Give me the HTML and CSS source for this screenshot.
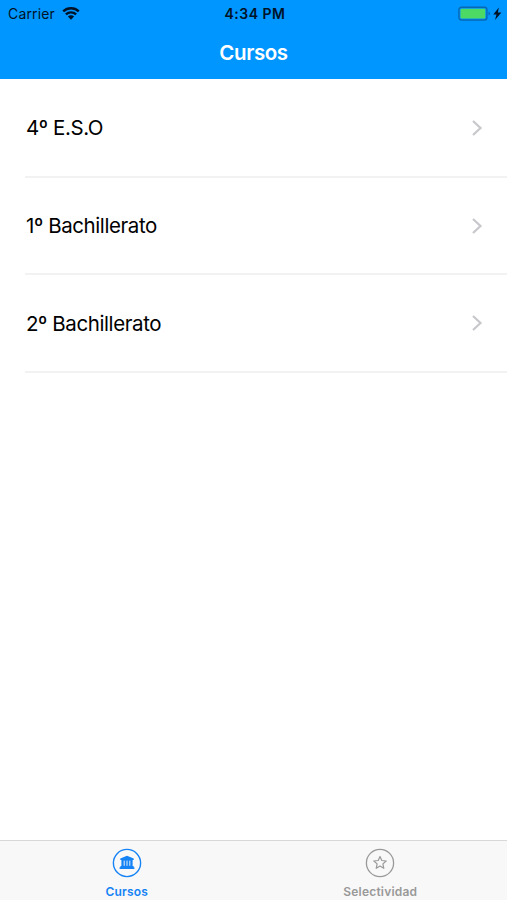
FILE: index.html
```
<!DOCTYPE html>
<html lang="es">
<head>
  <meta charset="UTF-8" />
  <meta name="viewport" content="width=device-width, initial-scale=1.0"/>
  <title>Cursos</title>
  <link rel="stylesheet" href="styles.css">
</head>
<body>
  <header>
    <div class="status-bar">
      <div class="network">
        <span class="carrier">Carrier</span>
        <svg class="wifi" width="18" height="13" viewBox="0 0 18 13">
          <path d="M1.2 4.4a11.2 11.2 0 0 1 15.6 0M3.9 7.4a7.3 7.3 0 0 1 10.2 0" fill="none" stroke="#001226" stroke-width="2.3"/>
          <path d="M9 12.7L5.9 9.5a4.4 4.4 0 0 1 6.2 0z" fill="#001226"/>
        </svg>
      </div>
      <span class="time">4:34 PM</span>
      <svg class="battery" width="44" height="16" viewBox="0 0 44 16">
        <rect x="0.9" y="1.2" width="28" height="12.8" rx="2.5" fill="none" stroke="#0868b4" stroke-width="1.4"/>
        <rect x="2.5" y="2.7" width="24.8" height="9.8" rx="1" fill="#4cd964"/>
        <path d="M30.5 5.6v4q1.5-.6 1.5-2t-1.5-2z" fill="#0868b4"/>
        <path d="M40.8 1.5L35.3 8.4h3.2L37 13.9 43.4 6.5h-3.5z" fill="#001226"/>
      </svg>
    </div>
    <h1>Cursos</h1>
  </header>

  <ul class="courses">
    <li>
      <span class="course-1">4º E.S.O</span>
      <svg class="chevron" width="12" height="18" viewBox="0 0 12 18"><path d="M2 2l7.5 7L2 16"/></svg>
    </li>
    <li>
      <span class="course-2">1º Bachillerato</span>
      <svg class="chevron" width="12" height="18" viewBox="0 0 12 18"><path d="M2 2l7.5 7L2 16"/></svg>
    </li>
    <li>
      <span class="course-3">2º Bachillerato</span>
      <svg class="chevron" width="12" height="18" viewBox="0 0 12 18"><path d="M2 2l7.5 7L2 16"/></svg>
    </li>
  </ul>

  <nav class="tab-bar">
    <a class="tab active">
      <svg width="30" height="30" viewBox="0 0 30 30">
        <circle cx="15" cy="15" r="13.6" fill="none" stroke="currentColor" stroke-width="1.4"/>
        <path d="M15 7.8l6.7 2.8v1.5h-1.1v5.8h1v1.4h.8v1.6H7.6v-1.6h.8v-1.4h1v-5.8H8.3v-1.5z" fill="currentColor"/>
        <path d="M12.2 12.6v5.2M15 12.6v5.2M17.8 12.6v5.2" stroke="#f8f8f8" stroke-width=".9"/>
      </svg>
      <span class="label-courses">Cursos</span>
    </a>
    <a class="tab">
      <svg width="30" height="30" viewBox="0 0 30 30">
        <circle cx="15" cy="15" r="13.6" fill="none" stroke="currentColor" stroke-width="1.3"/>
        <path d="M15 8.5l1.8 4 4.4.5-3.3 2.9.9 4.4-3.8-2.2-3.8 2.2.9-4.4L8.8 13l4.4-.5z" fill="none" stroke="currentColor" stroke-width="1.2" stroke-linejoin="round"/>
      </svg>
      <span class="label-exams">Selectividad</span>
    </a>
  </nav>
</body>
</html>
```
FILE: styles.css
```
* {
  box-sizing: border-box;
}

body {
  display: flex;
  flex-direction: column;
  height: 100vh;
  margin: 0;
  font-family: Inter, 'Liberation Sans', sans-serif;
  background: #fff;
  color: #000;
}

header {
  height: 79px;
  background: #0096ff;
}

.status-bar {
  display: grid;
  grid-template-columns: 1fr auto 1fr;
  align-items: center;
  height: 27px;
  padding: 0 5px 0 8px;
  color: #001226;
  font-size: 14px;
}

.network {
  display: flex;
  align-items: center;
  gap: 7px;
}

.carrier {
  letter-spacing: 0.15px;
}

.time {
  font-weight: 600;
  letter-spacing: 0.5px;
}

.battery {
  justify-self: end;
}

h1 {
  margin: 0;
  color: #fff;
  font-size: 20.5px;
  font-weight: 600;
  letter-spacing: -0.4px;
  line-height: 51px;
  text-align: center;
}

.courses {
  flex: 1;
  margin: 0;
  padding: 1px 0 0 25px;
  list-style: none;
}

.courses li {
  display: flex;
  justify-content: space-between;
  align-items: center;
  height: 97.7px;
  padding: 0 24px 0 1px;
  border-bottom: 2px solid #f2f2f3;
  font-size: 20.5px;
  letter-spacing: -0.4px;
}

.chevron {
  fill: none;
  stroke: #c7c7cc;
  stroke-width: 2.2;
}

.tab-bar {
  display: flex;
  height: 60px;
  background: #f8f8f8;
  border-top: 1px solid #d8d8d8;
}

.tab {
  display: flex;
  flex: 1;
  flex-direction: column;
  align-items: center;
  gap: 6px;
  padding-top: 7px;
  color: #999;
  font-size: 12px;
  font-weight: 600;
  letter-spacing: 0.2px;
  line-height: 15px;
}

.active {
  color: #1583f5;
}
```
